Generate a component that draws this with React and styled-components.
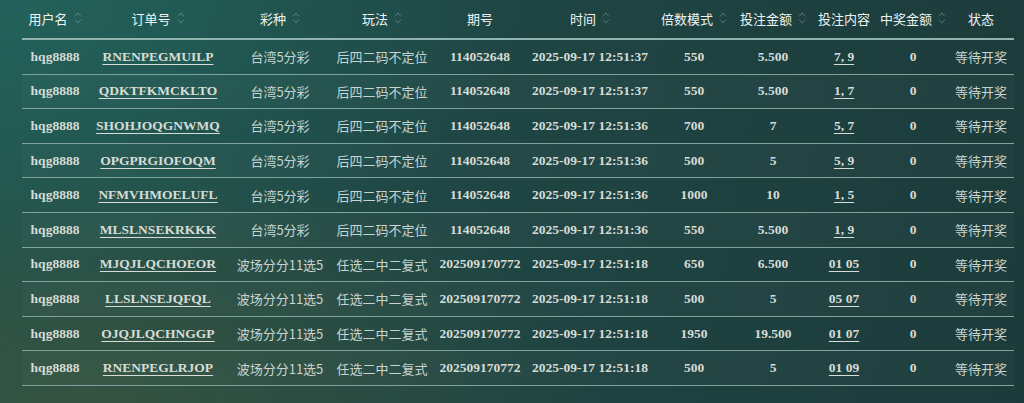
import styled, { createGlobalStyle } from 'styled-components';

const GlobalStyle = createGlobalStyle`
    * {
        box-sizing: border-box;
    }
    html, body {
        margin: 0;
        padding: 0;
    }
    body {
        width: 1024px;
        height: 403px;
        overflow: hidden;
        background:
            radial-gradient(ellipse 520px 300px at 0% 0%, rgba(36, 108, 100, 0.6), transparent),
            radial-gradient(ellipse 520px 260px at 8% 100%, rgba(64, 86, 60, 0.65), transparent),
            linear-gradient(100deg, #21524c 0%, #1f4644 45%, #1c3b3b 100%);
    }
`;

const columns = [
    { title: '用户名', width: 66, sort: true },
    { title: '订单号', width: 140, sort: true },
    { title: '彩种', width: 104, sort: true },
    { title: '玩法', width: 100, sort: true },
    { title: '期号', width: 96 },
    { title: '时间', width: 124, sort: true },
    { title: '倍数模式', width: 84, sort: true },
    { title: '投注金额', width: 74, sort: true },
    { title: '投注内容', width: 68 },
    { title: '中奖金额', width: 70, sort: true },
    { title: '状态', width: 66 },
];

const orders = [
    ['RNENPEGMUILP', '台湾5分彩', '后四二码不定位', '114052648', '2025-09-17 12:51:37', '550', '5.500', '7, 9'],
    ['QDKTFKMCKLTO', '台湾5分彩', '后四二码不定位', '114052648', '2025-09-17 12:51:37', '550', '5.500', '1, 7'],
    ['SHOHJOQGNWMQ', '台湾5分彩', '后四二码不定位', '114052648', '2025-09-17 12:51:36', '700', '7', '5, 7'],
    ['OPGPRGIOFOQM', '台湾5分彩', '后四二码不定位', '114052648', '2025-09-17 12:51:36', '500', '5', '5, 9'],
    ['NFMVHMOELUFL', '台湾5分彩', '后四二码不定位', '114052648', '2025-09-17 12:51:36', '1000', '10', '1, 5'],
    ['MLSLNSEKRKKK', '台湾5分彩', '后四二码不定位', '114052648', '2025-09-17 12:51:36', '550', '5.500', '1, 9'],
    ['MJQJLQCHOEOR', '波场分分11选5', '任选二中二复式', '202509170772', '2025-09-17 12:51:18', '650', '6.500', '01 05'],
    ['LLSLNSEJQFQL', '波场分分11选5', '任选二中二复式', '202509170772', '2025-09-17 12:51:18', '500', '5', '05 07'],
    ['OJQJLQCHNGGP', '波场分分11选5', '任选二中二复式', '202509170772', '2025-09-17 12:51:18', '1950', '19.500', '01 07'],
    ['RNENPEGLRJOP', '波场分分11选5', '任选二中二复式', '202509170772', '2025-09-17 12:51:18', '500', '5', '01 09'],
];

function SortIcon() {
    return (
        <svg width="8" height="14" viewBox="0 0 8 14" fill="none">
            <path d="M1 5.5 L4 2 L7 5.5" stroke="rgba(220,235,232,0.3)" strokeWidth="1" />
            <path d="M1 8.5 L4 12 L7 8.5" stroke="rgba(220,235,232,0.3)" strokeWidth="1" />
        </svg>
    );
}

export default function App() {
    return (
        <>
            <GlobalStyle />
            <Page>
                <Table>
                    <colgroup>
                        {columns.map((c, i) => <col key={i} style={{ width: c.width }} />)}
                    </colgroup>
                    <thead>
                        <tr>
                            {columns.map((c, i) =>
                                <Th key={i}>
                                    <HeadLabel>
                                        {c.title}
                                        {c.sort && <SortIcon />}
                                    </HeadLabel>
                                </Th>)}
                        </tr>
                    </thead>
                    <tbody>
                        {orders.map((o, i) =>
                            <Row key={i}>
                                <Td>hqg8888</Td>
                                <Td><Link>{o[0]}</Link></Td>
                                <Td $cjk>{o[1]}</Td>
                                <Td $cjk>{o[2]}</Td>
                                <Td>{o[3]}</Td>
                                <Td>{o[4]}</Td>
                                <Td>{o[5]}</Td>
                                <Td>{o[6]}</Td>
                                <Td><Link>{o[7]}</Link></Td>
                                <Td>0</Td>
                                <Td $cjk>等待开奖</Td>
                            </Row>)}
                    </tbody>
                </Table>
            </Page>
        </>
    );
}

const Page = styled.div`
    width: 1024px;
    height: 403px;
    padding: 0 10px 0 22px;
`;

const Table = styled.table`
    width: 992px;
    table-layout: fixed;
    border-collapse: separate;
    border-spacing: 0;
`;

const Th = styled.th`
    height: 40px;
    padding: 0 0 2px;
    border-bottom: 2px solid #8fb3ad;
    font-family: "Noto Sans CJK SC", "Noto Sans", sans-serif;
    font-size: 13px;
    font-weight: 400;
    color: #eef4f2;
    text-align: center;
    vertical-align: middle;
    white-space: nowrap;
`;

const HeadLabel = styled.span`
    display: inline-flex;
    align-items: center;
    gap: 6px;
`;

const Row = styled.tr`
    &:nth-child(even) td {
        background: rgba(255, 255, 255, 0.025);
    }
`;

const Td = styled.td`
    height: 34.6px;
    padding: 0;
    border-bottom: 1.5px solid #7fa29d;
    text-align: center;
    vertical-align: middle;
    white-space: nowrap;
    font-family: ${p => p.$cjk ? '"Noto Sans CJK SC", "Noto Sans", sans-serif' : '"Liberation Serif", "Times New Roman", serif'};
    font-size: ${p => p.$cjk ? '13px' : '13.5px'};
    font-weight: ${p => p.$cjk ? 400 : 700};
    color: ${p => p.$cjk ? '#c9d4d0' : '#d6dcd6'};
`;

const Link = styled.span`
    text-decoration: underline;
    text-underline-offset: 3px;
    text-decoration-thickness: 1px;
    cursor: pointer;
`;
